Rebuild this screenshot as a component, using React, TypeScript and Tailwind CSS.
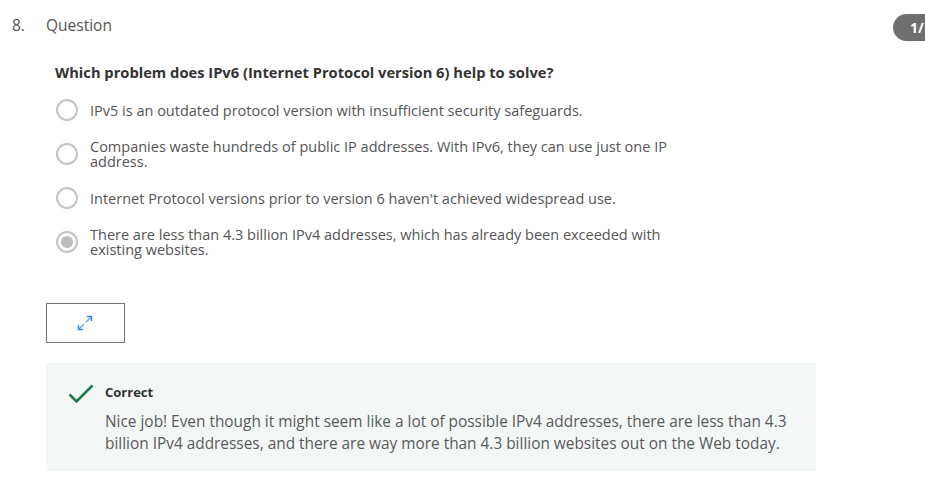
import React from 'react';

const options = [
  'IPv5 is an outdated protocol version with insufficient security safeguards.',
  'Companies waste hundreds of public IP addresses. With IPv6, they can use just one IP address.',
  "Internet Protocol versions prior to version 6 haven't achieved widespread use.",
  'There are less than 4.3 billion IPv4 addresses, which has already been exceeded with existing websites.',
];

const Radio: React.FC<{ checked?: boolean }> = ({ checked }) => (
  <span className="flex h-[22px] w-[22px] shrink-0 items-center justify-center rounded-full border-2 border-[#c4c4c4] bg-white">
    {checked && <span className="h-[12px] w-[12px] rounded-full bg-[#bdbdbd]" />}
  </span>
);

export default function App() {
  return (
    <div
      className="relative h-[493px] w-[925px] overflow-hidden bg-white text-[#444]"
      style={{ fontFamily: '"Open Sans", "Noto Sans", sans-serif' }}
    >
      {/* Header */}
      <div className="flex items-center pt-[14px] text-[15.5px] text-[#555]">
        <span className="w-[46px] pl-[12px]">8.</span>
        <span>Question</span>
      </div>
      <div className="absolute left-[893px] top-[14px] flex h-[27px] w-[50px] items-center rounded-full bg-[#6f6f6f] pl-[17px] text-[14px] font-bold text-white">
        1/
      </div>

      {/* Question */}
      <div className="pl-[55px] pt-[24px]">
        <h2 className="text-[14.7px] font-bold text-[#333]">
          Which problem does IPv6 (Internet Protocol version 6) help to solve?
        </h2>
        <div className="mt-[16px] flex flex-col gap-[18px] pl-[1px]">
          {options.map((o, i) => (
            <label key={i} className="flex items-center gap-[12px]">
              <Radio checked={i === 3} />
              <span className="max-w-[585px] text-[14.5px] leading-[15px] text-[#555]">{o}</span>
            </label>
          ))}
        </div>
      </div>

      {/* Expand button */}
      <div className="ml-[46px] mt-[46px] flex h-[40px] w-[79px] items-center justify-center border border-[#777] bg-white">
        <svg width="18" height="18" viewBox="0 0 18 18" fill="none" stroke="#3b82e0" strokeWidth="1.4" className="-ml-[2px]">
          <path d="M11 2.5h4.5V7" />
          <path d="M15.5 2.5 10 8" strokeOpacity="0.75" />
          <path d="M7 15.5H2.5V11" />
          <path d="M2.5 15.5 8 10" strokeOpacity="0.75" />
        </svg>
      </div>

      {/* Feedback */}
      <div className="ml-[46px] mt-[20px] flex w-[770px] gap-[11px] bg-[#f3f8f6] pb-[16px] pl-[22px] pt-[20px]">
        <svg width="26" height="20" viewBox="0 0 26 20" fill="none" className="mt-[1px] shrink-0">
          <path d="M1.5 10.5l7 7L24.5 1.5" stroke="#1e7d4c" strokeWidth="2.6" />
        </svg>
        <div>
          <div className="text-[13px] font-bold text-[#333]">Correct</div>
          <p className="mt-[8px] text-[15.4px] leading-[22px] text-[#5a5a5a]">
            Nice job! Even though it might seem like a lot of possible IPv4 addresses, there are less than 4.3
            <br />
            billion IPv4 addresses, and there are way more than 4.3 billion websites out on the Web today.
          </p>
        </div>
      </div>
    </div>
  );
}
